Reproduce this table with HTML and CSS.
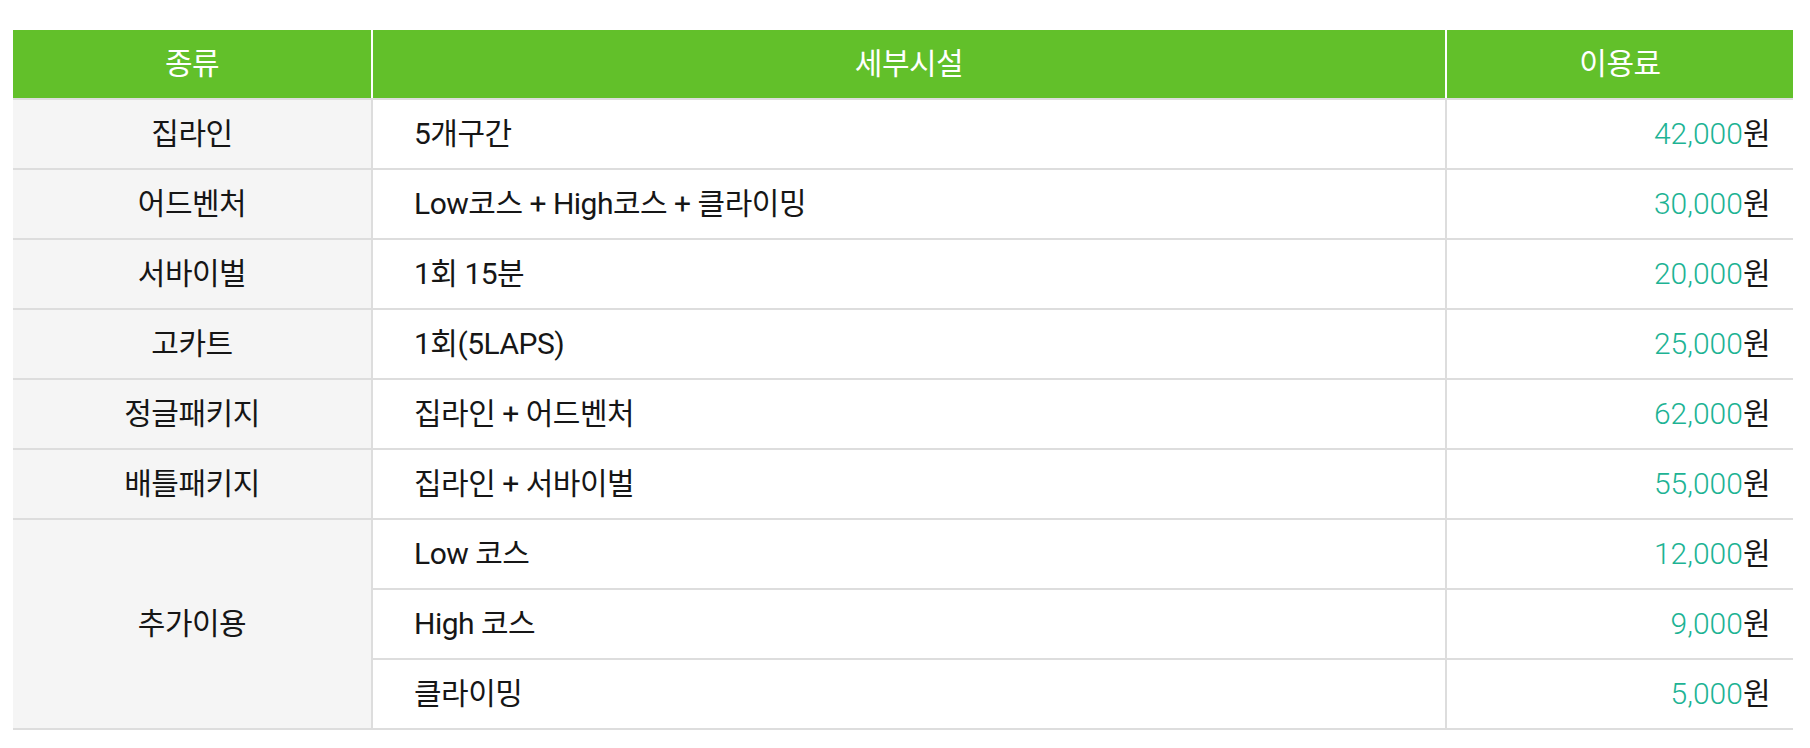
FILE: index.html
```html
<!DOCTYPE html>
<html lang="ko">
<head>
<meta charset="utf-8">
<title>이용료</title>
<link rel="stylesheet" href="styles.css">
</head>
<body>
<div class="wrap">
<table class="price">
  <colgroup>
    <col class="c1"><col class="c2"><col class="c3">
  </colgroup>
  <thead>
    <tr><th>종류</th><th>세부시설</th><th>이용료</th></tr>
  </thead>
  <tbody>
    <tr><td class="kind">집라인</td><td class="detail">5개구간</td><td class="fee"><span class="num">42,000</span>원</td></tr>
    <tr><td class="kind">어드벤처</td><td class="detail">Low코스 + High코스 + 클라이밍</td><td class="fee"><span class="num">30,000</span>원</td></tr>
    <tr><td class="kind">서바이벌</td><td class="detail">1회 15분</td><td class="fee"><span class="num">20,000</span>원</td></tr>
    <tr><td class="kind">고카트</td><td class="detail">1회(5LAPS)</td><td class="fee"><span class="num">25,000</span>원</td></tr>
    <tr><td class="kind">정글패키지</td><td class="detail">집라인 + 어드벤처</td><td class="fee"><span class="num">62,000</span>원</td></tr>
    <tr><td class="kind">배틀패키지</td><td class="detail">집라인 + 서바이벌</td><td class="fee"><span class="num">55,000</span>원</td></tr>
    <tr><td class="kind" rowspan="3">추가이용</td><td class="detail">Low 코스</td><td class="fee"><span class="num">12,000</span>원</td></tr>
    <tr><td class="detail">High 코스</td><td class="fee"><span class="num">9,000</span>원</td></tr>
    <tr><td class="detail">클라이밍</td><td class="fee"><span class="num">5,000</span>원</td></tr>
  </tbody>
</table>
</div>
</body>
</html>
```

FILE: styles.css
```css
html, body {
  margin: 0;
  padding: 0;
  background: #ffffff;
}
body {
  font-family: Roboto, "Noto Sans CJK KR", sans-serif;
  color: #161616;
}
.wrap {
  padding: 30px 17px 0 13px;
}
.price {
  width: 1780px;
  border-collapse: collapse;
  table-layout: fixed;
  font-size: 30px;
  letter-spacing: -0.5px;
}
.c1 { width: 359px; }
.c2 { width: 1074px; }
.c3 { width: 347px; }
.price th {
  background: #62c02a;
  color: #ffffff;
  font-weight: 400;
  height: 68px;
  padding: 0;
  text-align: center;
  border-bottom: 2px solid #dddddd;
  border-left: 2px solid #ffffff;
  line-height: 1;
}
.price th:first-child { border-left: none; }
.price td {
  height: 68px;
  padding: 0;
  border-bottom: 2px solid #dddddd;
  border-left: 2px solid #dddddd;
  line-height: 1;
}
.price td.kind {
  border-left: none;
  background: #f5f5f5;
  text-align: center;
}
.price td.detail {
  padding-left: 41px;
}
.price td.fee {
  text-align: right;
  padding-right: 23px;
}
.num {
  color: #1db394;
  font-weight: 300;
  letter-spacing: 0;
}
```
